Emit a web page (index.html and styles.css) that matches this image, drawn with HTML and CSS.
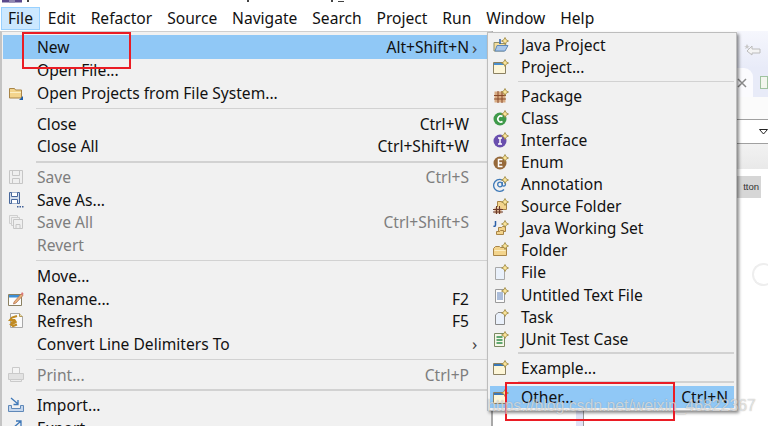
FILE: index.html
```html
<!DOCTYPE html>
<html lang="en">
<head>
    <meta charset="UTF-8">
    <title>Eclipse File menu</title>
    <link rel="stylesheet" href="styles.css">
</head>
<body>
    <div class="titlebar">
        <svg class="app-icon" width="20" height="3" viewBox="0 0 20 3"><rect width="20" height="2.500" fill="#5b4a8c"/><rect x="7" width="6" height="2.500" fill="#8f86b0"/></svg>
        <span class="title-mark title-mark-a"></span>
        <span class="title-mark title-mark-b"></span>
        <span class="title-mark title-mark-c"></span>
        <span class="title-mark title-mark-d"></span>
    </div>

    <div class="menubar">
        <span class="menubar-item active">File</span>
        <span class="menubar-item">Edit</span>
        <span class="menubar-item">Refactor</span>
        <span class="menubar-item">Source</span>
        <span class="menubar-item">Navigate</span>
        <span class="menubar-item">Search</span>
        <span class="menubar-item">Project</span>
        <span class="menubar-item">Run</span>
        <span class="menubar-item">Window</span>
        <span class="menubar-item">Help</span>
    </div>

    <div class="workspace">
        <div class="toolbar">
            <svg width="18" height="14" viewBox="0 0 18 14"><path d="M8 2 3 7l5 4V9h8V5H8z" fill="#f4f4f4" stroke="#bcbcbc"/><path d="M3 0l1 2 2 0-2 1 1 2-2-1-2 1 1-2-2-1h2z" fill="#c8c8c8"/></svg>
        </div>
        <div class="tabstrip">
            <div class="tab">
                <svg width="10" height="10" viewBox="0 0 10 10"><path d="M1 1l8 8M9 1 1 9" stroke="#8a8a8a" stroke-width="1.500"/></svg>
            </div>
            <span class="tab-next"></span>
        </div>
        <div class="blank-row"></div>
        <div class="dropdown-row">
            <svg width="9" height="6" viewBox="0 0 9 6"><path d="M.5.5h8L4.500 5z" fill="#fff" stroke="#222"/></svg>
        </div>
        <div class="gray-row"></div>
        <div class="fake-button">tton</div>
        <span class="ring"></span>
    </div>

    <div class="under-menu"><span class="under-stripe"></span></div>

    <div class="menu main-menu">
        <div class="row selected"><span class="icon"></span><span class="label">New</span><span class="key">Alt+Shift+N</span><span class="arrow">›</span></div>
        <div class="row"><span class="icon"></span><span class="label">Open File...</span></div>
        <div class="row">
            <span class="icon"><svg width="16" height="16" viewBox="0 0 16 16"><path d="M1.500 3.500h5l1 1.500h6v8h-12z" fill="#f3d48c" stroke="#a98547"/><path d="M2 7h11v1H2z" fill="#fbeec4"/><path d="M15 11v4h-4z" fill="#1f5fa8"/></svg></span>
            <span class="label">Open Projects from File System...</span>
        </div>
        <div class="sep"></div>
        <div class="row"><span class="icon"></span><span class="label">Close</span><span class="key">Ctrl+W</span></div>
        <div class="row"><span class="icon"></span><span class="label">Close All</span><span class="key">Ctrl+Shift+W</span></div>
        <div class="sep"></div>
        <div class="row disabled">
            <span class="icon"><svg width="16" height="16" viewBox="0 0 16 16"><path d="M1.500 1.500h13v13h-13z" fill="#efefef" stroke="#c6c6c6"/><path d="M4.500 1.500v5h7v-5M4.500 14.500v-5h7v5" fill="none" stroke="#c6c6c6"/></svg></span>
            <span class="label">Save</span><span class="key">Ctrl+S</span>
        </div>
        <div class="row">
            <span class="icon"><svg width="16" height="16" viewBox="0 0 16 16"><path d="M1.500 .5h10v11h-10z" fill="#d5dfee" stroke="#48689c"/><path d="M3.500 .5v4h6v-4M3.500 11.500v-4h6v4" fill="#fff" stroke="#48689c"/><path d="M9 14h1.500v1.500H9zM11.500 14H13v1.500h-1.500zM14 14h1.500v1.500H14z" fill="#3f5f96"/></svg></span>
            <span class="label">Save As...</span>
        </div>
        <div class="row disabled">
            <span class="icon"><svg width="16" height="16" viewBox="0 0 16 16"><path d="M1.500 1.500h8v8h-8z" fill="#efefef" stroke="#cfcfcf"/><path d="M3.500 3.500h8v8h-8z" fill="#efefef" stroke="#cfcfcf"/><path d="M5.500 5.500h9v9h-9z" fill="#efefef" stroke="#c6c6c6"/><path d="M8 14.500v-4h4v4" fill="none" stroke="#c6c6c6"/></svg></span>
            <span class="label">Save All</span><span class="key">Ctrl+Shift+S</span>
        </div>
        <div class="row disabled"><span class="icon"></span><span class="label">Revert</span></div>
        <div class="sep"></div>
        <div class="row"><span class="icon"></span><span class="label">Move...</span></div>
        <div class="row">
            <span class="icon"><svg width="16" height="16" viewBox="0 0 16 16"><path d="M.5 3.500h13v11H.5z" fill="#fdfdfd" stroke="#8b8162"/><path d="M1 4h12v2.500H1z" fill="#3d8fd6"/><path d="M6 11 13 3l2 1.500L8 12l-2.500 1z" fill="#e9b37c" stroke="#b06c4a" stroke-width=".7"/><path d="M13 3l1-2 1.500 1.500-.5 2z" fill="#d77"/></svg></span>
            <span class="label">Rename...</span><span class="key">F2</span>
        </div>
        <div class="row">
            <span class="icon"><svg width="16" height="16" viewBox="0 0 16 16"><path d="M2.500 .5h9l3 3v11h-12z" fill="#fafafa" stroke="#a8a8a8"/><path d="M11.500.5v3h3" fill="#f0dca0" stroke="#b39a5a"/><path d="M9 3 4 4.500 2 7h4.500l1 1.500L3 9.500 6 10 3 11.500 5 13l4-1.500" fill="none" stroke="#c08a22" stroke-width="2"/></svg></span>
            <span class="label">Refresh</span><span class="key">F5</span>
        </div>
        <div class="row"><span class="icon"></span><span class="label">Convert Line Delimiters To</span><span class="arrow">›</span></div>
        <div class="sep"></div>
        <div class="row disabled">
            <span class="icon"><svg width="16" height="16" viewBox="0 0 16 16"><path d="M4.500 .5h7v6h-7z" fill="#f4f4f4" stroke="#cacaca"/><path d="M.5 6.500h15v6H.5z" fill="#e2e2e2" stroke="#cacaca"/><path d="M2.500 12.500h11v2h-11z" fill="#eee" stroke="#cacaca"/></svg></span>
            <span class="label">Print...</span><span class="key">Ctrl+P</span>
        </div>
        <div class="sep"></div>
        <div class="row">
            <span class="icon"><svg width="16" height="16" viewBox="0 0 16 16"><path d="M.5 8.500h3v3h9v-3h3v6H.5z" fill="#c5d7ee" stroke="#5f88b8"/><path d="M3 1l7 6M10 3v4.500H5.500" fill="none" stroke="#3f78b8" stroke-width="1.300"/></svg></span>
            <span class="label">Import...</span>
        </div>
        <div class="row">
            <span class="icon"><svg width="16" height="16" viewBox="0 0 16 16"><path d="M.5 8.500h3v3h9v-3h3v6H.5z" fill="#c5d7ee" stroke="#5f88b8"/><path d="M5 8l8-7M8 1h5v5" fill="none" stroke="#3f78b8" stroke-width="1.300"/></svg></span>
            <span class="label">Export...</span>
        </div>
    </div>

    <div class="menu sub-menu">
        <div class="row">
            <span class="icon"><svg width="16" height="16" viewBox="0 0 16 16"><path d="M1 5.500h5l1 1h6L11 14H1z" fill="#f5dd9d" stroke="#8f8f6b"/><path d="M2 14 4 8.500h11L12 14z" fill="#a9c7ea" stroke="#5f88b8"/><path d="M7 2v5" stroke="#2b5fa8" stroke-width="1.500"/><use href="#spark"/></svg></span>
            <span class="label">Java Project</span>
        </div>
        <div class="row">
            <span class="icon"><svg width="16" height="16" viewBox="0 0 16 16"><path d="M.5 3.500h12v11H.5z" fill="#fdf6d8" stroke="#8b8162"/><path d="M1 4h11v2H1z" fill="#4a8fcf"/><use href="#spark"/></svg></span>
            <span class="label">Project...</span>
        </div>
        <div class="sep"></div>
        <div class="row">
            <span class="icon"><svg width="16" height="16" viewBox="0 0 16 16"><path d="M1.500 3.500h11v11h-11z" fill="#d8ac84"/><path d="M1 7.500h12M1 11h12M5 3v12M9 3v12" stroke="#8a4a2a"/><use href="#spark"/></svg></span>
            <span class="label">Package</span>
        </div>
        <div class="row">
            <span class="icon"><svg width="16" height="16" viewBox="0 0 16 16"><circle cx="7" cy="9" r="6.500" fill="#3f9a4a"/><path d="M9.500 6.500a3 3 0 1 0 0 5" fill="none" stroke="#fff" stroke-width="1.600"/><use href="#spark"/></svg></span>
            <span class="label">Class</span>
        </div>
        <div class="row">
            <span class="icon"><svg width="16" height="16" viewBox="0 0 16 16"><circle cx="7" cy="9" r="6.500" fill="#6a4fae"/><path d="M5 6h4M5 12h4M7 6v6" stroke="#fff" stroke-width="1.500"/><use href="#spark"/></svg></span>
            <span class="label">Interface</span>
        </div>
        <div class="row">
            <span class="icon"><svg width="16" height="16" viewBox="0 0 16 16"><circle cx="7" cy="9" r="6.500" fill="#96693a"/><path d="M9.500 5.500h-4v7h4M5.500 9h3.500" fill="none" stroke="#fff" stroke-width="1.500"/><use href="#spark"/></svg></span>
            <span class="label">Enum</span>
        </div>
        <div class="row">
            <span class="icon"><svg width="16" height="16" viewBox="0 0 16 16"><path d="M11 13.500A6 6 0 1 1 12.500 8c0 2.500-3 3-3.300 .5V6" fill="none" stroke="#3f7ab8" stroke-width="1.300"/><circle cx="7" cy="8.500" r="2.300" fill="none" stroke="#3f7ab8" stroke-width="1.300"/><use href="#spark"/></svg></span>
            <span class="label">Annotation</span>
        </div>
        <div class="row">
            <span class="icon"><svg width="16" height="16" viewBox="0 0 16 16"><path d="M4.500 9V3.500h4l1 1h4v7H8" fill="#f3d48c" stroke="#a98547"/><path d="M1.500 9.500h7v6h-7z" fill="#d9b08c"/><path d="M0 11.500h10M0 14h10M3.500 8v8M6.500 8v8" stroke="#6a3a2a"/><use href="#spark"/></svg></span>
            <span class="label">Source Folder</span>
        </div>
        <div class="row">
            <span class="icon"><svg width="16" height="16" viewBox="0 0 16 16"><path d="M2.500 1v4c0 1.500-1 1.500-2 1" fill="none" stroke="#2b5fa8" stroke-width="1.500"/><path d="M5.500 7.500h3l1-1h3v5h-7z" fill="#f3d48c" stroke="#a98547"/><path d="M3.500 11.500h3l1-1h3v4h-7z" fill="#f3d48c" stroke="#a98547"/><use href="#spark"/></svg></span>
            <span class="label">Java Working Set</span>
        </div>
        <div class="row">
            <span class="icon"><svg width="16" height="16" viewBox="0 0 16 16"><path d="M.5 6.500l2-2h4l1 1h6v8H.5z" fill="#f3d48c" stroke="#a98547"/><path d="M1.500 8h11v1h-11z" fill="#fbeec4"/><use href="#spark"/></svg></span>
            <span class="label">Folder</span>
        </div>
        <div class="row">
            <span class="icon"><svg width="16" height="16" viewBox="0 0 16 16"><path d="M2.500 3.500h9v12h-9z" fill="#eaf1fb" stroke="#a8a8a8"/><use href="#spark"/></svg></span>
            <span class="label">File</span>
        </div>
        <div class="row">
            <span class="icon"><svg width="16" height="16" viewBox="0 0 16 16"><path d="M2.500 2.500h9v13h-9z" fill="#fbfbfb" stroke="#9a9a9a"/><path d="M4 6h6M4 8h6M4 10h6M4 12h6" stroke="#5a7fb8"/><use href="#spark"/></svg></span>
            <span class="label">Untitled Text File</span>
        </div>
        <div class="row">
            <span class="icon"><svg width="16" height="16" viewBox="0 0 16 16"><path d="M2.500 6 5 3.500h6.500v12h-9z" fill="#eaf1fb" stroke="#8a8a8a"/><use href="#spark"/></svg></span>
            <span class="label">Task</span>
        </div>
        <div class="row">
            <span class="icon"><svg width="16" height="16" viewBox="0 0 16 16"><path d="M1.500 2.500h10v13h-10z" fill="#f6f6e8" stroke="#7a8a62"/><path d="M3.500 6h6M3.500 9h6M3.500 12h6" stroke="#2f8f4a" stroke-width="1.300"/><use href="#spark"/></svg></span>
            <span class="label">JUnit Test Case</span>
        </div>
        <div class="sep"></div>
        <div class="row">
            <span class="icon"><svg width="16" height="16" viewBox="0 0 16 16"><path d="M.5 3.500h12v11H.5z" fill="#fdf6d8" stroke="#8b8162"/><path d="M1 4h11v2H1z" fill="#3a78b8"/><use href="#spark"/></svg></span>
            <span class="label">Example...</span>
        </div>
        <div class="sep"></div>
        <div class="row selected">
            <span class="icon"><svg width="16" height="16" viewBox="0 0 16 16"><path d="M.5 3.500h12v11H.5z" fill="#fdf6d8" stroke="#8b8162"/><path d="M1 4h11v2H1z" fill="#3a78b8"/><use href="#spark"/></svg></span>
            <span class="label">Other...</span><span class="key">Ctrl+N</span>
        </div>
    </div>

    <!-- shared yellow "new" marker for the wizard icons -->
    <svg class="defs" width="0" height="0">
        <defs>
            <path id="spark" d="M12 .5l1.200 2.300 2.300 1.200-2.300 1.200L12 7.500l-1.200-2.500L8.500 4l2.300-1.200z" fill="#fbe59a" stroke="#9a8540" stroke-width=".8"/>
        </defs>
    </svg>

    <div class="mark mark-new"></div>
    <div class="mark mark-other"></div>
    <div class="watermark">https://blog.csdn.net/weixin_46822367</div>
</body>
</html>
```

FILE: styles.css
```css
* { box-sizing: border-box; }
html, body {
    margin: 0;
    width: 768px;
    height: 426px;
    overflow: hidden;
}
body {
    position: relative;
    background-color: #fff;
    font-family: "Noto Sans", "Open Sans", sans-serif;
    font-size: 15.600px;
    color: #111;
}

.titlebar {
    height: 7px;
    position: relative;
    overflow: hidden;
}
.app-icon { display: block; margin-left: 2px; }
.title-mark {
    position: absolute;
    top: 0;
    width: 2px;
    height: 2px;
    background-color: #444;
}
.title-mark-a { left: 27px; }
.title-mark-b { left: 247px; }
.title-mark-c { left: 331px; }
.title-mark-d { left: 338px; width: 6px; height: 1px; top: 1px; }

.menubar {
    display: flex;
    height: 24px;
}
.menubar-item {
    display: flex;
    align-items: center;
    padding: 0 6px;
    height: 23px;
    margin-right: .9px;
    border: 1px solid transparent;
    line-height: 1;
}
.menubar-item.active {
    background-color: #cce8ff;
    border-color: #99d1ff;
    margin-left: 1px;
}

/* what shows behind the open menus */
.workspace {
    height: 395px;
    padding-left: 737px;
    background-color: #fff;
}
.toolbar {
    height: 37px;
    padding: 13px 0 0 7px;
    background: linear-gradient(#f6f7fd, #e8ebf8);
}
.toolbar svg { display: block; }
.tabstrip {
    display: flex;
    align-items: center;
    height: 29px;
    background-color: #e8ebf8;
}
.tab {
    display: flex;
    align-items: center;
    width: 16px;
    height: 29px;
    background-color: #fbfbfe;
    border-top-right-radius: 9px;
    margin-right: 7px;
    flex: none;
}
.tab-next {
    width: 10px;
    height: 13px;
    border: 1px solid #9fc39f;
    background-color: #f2f6ee;
}
.blank-row {
    height: 22px;
    background-color: #fbfbfb;
}
.dropdown-row {
    height: 25px;
    padding: 9px 0 0 22px;
    border-top: 1px solid #a0a0a0;
    border-bottom: 1px solid #a0a0a0;
}
.dropdown-row svg { display: block; }
.gray-row {
    height: 25px;
    background: linear-gradient(#f2f2f2, #e9e9e9);
}
.fake-button {
    width: 24px;
    height: 22px;
    margin-top: 7px;
    background-color: #d6d6d6;
    color: #333;
    font-family: "Liberation Sans", sans-serif;
    font-size: 9.500px;
    line-height: 22px;
    text-align: right;
    padding-right: 2px;
}
.ring {
    display: block;
    width: 23px;
    height: 23px;
    margin: 65px 0 0 15px;
    border-radius: 50%;
    border: 2px solid #eee;
    border-right-color: transparent;
}

/* sliver of the editor below the submenu */
.under-menu {
    position: absolute;
    left: 583px;
    top: 408px;
    width: 1px;
    height: 18px;
    background-color: #999;
}
.under-stripe {
    display: block;
    width: 7px;
    height: 18px;
    margin-left: -7px;
    background-color: #dfe3f6;
}

.menu {
    position: absolute;
    background-color: #f1f1f1;
}
.main-menu {
    left: 0;
    top: 31px;
    width: 493px;
    height: 400px;
    padding: 3px 0 0 1px;
    border-left: 2px solid #c4c4c4;
    border-top: 1px solid #cfcfcf;
    border-right: 2px solid #a8a8a8;
}
.sub-menu {
    left: 487px;
    top: 32px;
    width: 250px;
    padding: 1px 2px 2px 2px;
    border: 1px solid #bdbdbd;
    box-shadow: 2px 2px 3px rgba(0, 0, 0, .45);
}
.row {
    display: flex;
    align-items: center;
    height: 22.700px;
    padding-right: 11px;
    white-space: nowrap;
}
.sub-menu .row { height: 22.050px; padding-right: 8px; }
.row.selected { background-color: #90c8f6; }
.main-menu .row.selected { height: 24px; }
.icon {
    display: flex;
    align-items: center;
    width: 34px;
    padding-left: 5px;
    flex: none;
}
.icon svg { display: block; flex: none; }
.sub-menu .icon { width: 31px; padding-left: 3px; }
.label { flex: 1; }
.key { margin-right: 11px; }
.sub-menu .key { margin-right: -2px; }
.arrow {
    width: 8px;
    margin-left: -8px;
    color: #444;
    font-size: 17px;
    line-height: 1;
}
.disabled { color: #7e7e7e; }
.sep {
    height: 1.500px;
    margin: 3.250px 0 3.250px 33px;
    background-color: #d2d2d2;
}
.sub-menu .sep { margin: 2.750px 0 2.750px 28px; }
.defs { position: absolute; }

.mark {
    position: absolute;
    border: 2px solid #ea1c24;
}
.mark-new {
    left: 22px;
    top: 32px;
    width: 109px;
    height: 37px;
}
.mark-other {
    left: 505px;
    top: 382px;
    width: 170px;
    height: 39px;
}
.watermark {
    position: absolute;
    left: 487px;
    top: 397px;
    font-family: "Liberation Sans", sans-serif;
    font-size: 15.800px;
    color: rgba(255, 255, 255, .6);
    text-shadow: 0 0 1px rgba(90, 90, 90, .55);
    white-space: nowrap;
}
```
